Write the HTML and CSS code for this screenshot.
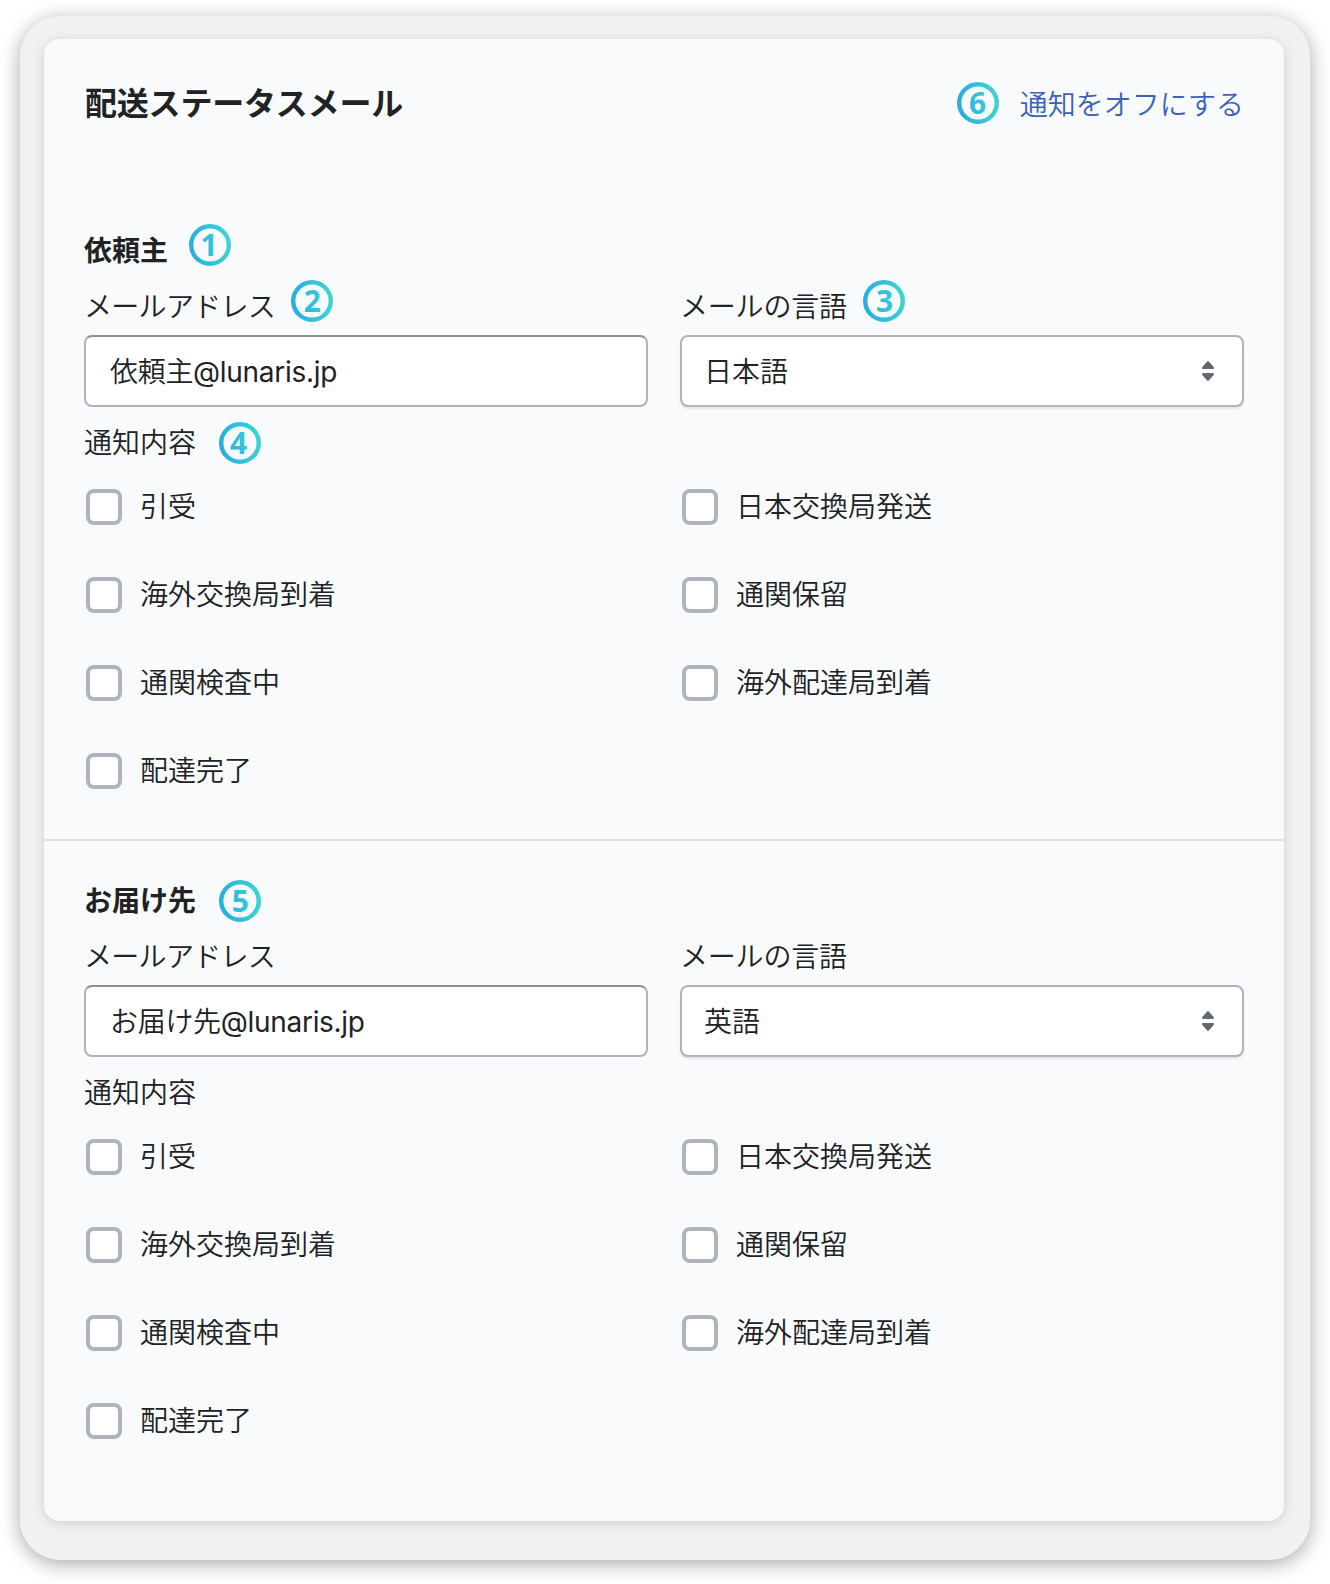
FILE: index.html
```html
<!DOCTYPE html>
<html lang="ja">
<head>
  <meta charset="UTF-8">
  <title>配送ステータスメール</title>
  <link rel="stylesheet" href="styles.css">
</head>
<body>

<svg class="defs" width="0" height="0">
  <defs>
    <linearGradient id="ring" gradientUnits="userSpaceOnUse" x1="0" y1="24" x2="42" y2="18">
      <stop offset="0" stop-color="#29abe2"/>
      <stop offset="1" stop-color="#3cd6d0"/>
    </linearGradient>
    <symbol id="arrows" viewBox="0 0 12 20">
      <path d="M5.2.4Q6-.4 6.8.4L11.7 6Q12.4 8 11 8H1Q-.4 8 .3 6ZM5.2 19.6Q6 20.4 6.8 19.6L11.7 14Q12.4 12 11 12H1Q-.4 12 .3 14Z"/>
    </symbol>
  </defs>
</svg>

<div class="frame">
  <div class="panel">
    <div class="header">
      <h1>配送ステータスメール</h1>
      <svg class="badge" viewBox="0 0 42 42"><circle cx="21" cy="21" r="18.8"/><text x="20.5" y="31.5">6</text></svg>
      <a class="link">通知をオフにする</a>
    </div>

    <div class="section">
      <div class="row raised title">
        <h2>依頼主</h2>
        <svg class="badge" viewBox="0 0 42 42"><circle cx="21" cy="21" r="18.8"/><text x="20" y="31.5">1</text></svg>
      </div>
      <div class="columns fields">
        <div class="field">
          <div class="row raised mail">
            <label for="sender-mail">メールアドレス</label>
            <svg class="badge" viewBox="0 0 42 42"><circle cx="21" cy="21" r="18.8"/><text x="21.3" y="31.5">2</text></svg>
          </div>
          <input type="text" id="sender-mail" value="依頼主@lunaris.jp">
        </div>
        <div class="field">
          <div class="row raised lang">
            <label>メールの言語</label>
            <svg class="badge" viewBox="0 0 42 42"><circle cx="21" cy="21" r="18.8"/><text x="21.5" y="31.5">3</text></svg>
          </div>
          <div class="select"><span>日本語</span><svg class="arrows"><use href="#arrows"/></svg></div>
        </div>
      </div>
      <div class="row notice">
        <span>通知内容</span>
        <svg class="badge" viewBox="0 0 42 42"><circle cx="21" cy="21" r="18.8"/><text x="19.5" y="31.5">4</text></svg>
      </div>
      <div class="columns choices">
        <label><input type="checkbox">引受</label>
        <label><input type="checkbox">日本交換局発送</label>
        <label><input type="checkbox">海外交換局到着</label>
        <label><input type="checkbox">通関保留</label>
        <label><input type="checkbox">通関検査中</label>
        <label><input type="checkbox">海外配達局到着</label>
        <label><input type="checkbox">配達完了</label>
      </div>
    </div>

    <div class="section">
      <div class="row">
        <h2>お届け先</h2>
        <svg class="badge" viewBox="0 0 42 42"><circle cx="21" cy="21" r="18.8"/><text x="21.3" y="31.5">5</text></svg>
      </div>
      <div class="columns fields">
        <div class="field">
          <div class="row mail"><label for="receiver-mail">メールアドレス</label></div>
          <input type="text" id="receiver-mail" value="お届け先@lunaris.jp">
        </div>
        <div class="field">
          <div class="row lang"><label>メールの言語</label></div>
          <div class="select"><span>英語</span><svg class="arrows"><use href="#arrows"/></svg></div>
        </div>
      </div>
      <div class="row notice"><span>通知内容</span></div>
      <div class="columns choices">
        <label><input type="checkbox">引受</label>
        <label><input type="checkbox">日本交換局発送</label>
        <label><input type="checkbox">海外交換局到着</label>
        <label><input type="checkbox">通関保留</label>
        <label><input type="checkbox">通関検査中</label>
        <label><input type="checkbox">海外配達局到着</label>
        <label><input type="checkbox">配達完了</label>
      </div>
    </div>
  </div>
</div>

</body>
</html>
```
FILE: styles.css
```css
* { box-sizing: border-box; }
body { margin: 0; padding: 16px 20px 24px; background: #fff; color: #202223; font: 350 28px/40px Inter, "Noto Sans CJK JP", sans-serif; }
h1, h2 { margin: 0; font-weight: 600; }
h1 { padding: 1px 0 0 1px; font-size: 32px; line-height: 48px; letter-spacing: -0.2px; }
h2 { font-size: 28px; line-height: 40px; }
.defs { display: block; }

.frame { height: 1544px; padding: 23px 26px 39px 24px; background: #f0f1f3; border-radius: 40px; box-shadow: 0 4px 20px rgba(0,0,0,0.34); }
.panel { height: 1482px; background: #f9fafc; border-radius: 16px; box-shadow: 0 2px 12px rgba(0,0,0,0.14); }

.header { display: flex; align-items: center; height: 152px; padding: 40px 40px 64px; }
.header .badge { margin-left: auto; }
.link { padding-top: 4px; margin-left: 21px; color: #3a63b8; }

.section { padding: 40px 40px 50px; }
.section + .section { border-top: 2px solid #dfe2e5; }
.row { display: flex; align-items: center; height: 40px; }
.badge { flex: none; width: 42px; height: 42px; margin-left: 23px; }
.badge circle { fill: none; stroke: url(#ring); stroke-width: 4.4; }
.badge text { fill: url(#ring); font: 700 30px "Noto Sans", sans-serif; letter-spacing: 0; text-anchor: middle; }
.raised .badge { margin-bottom: 12px; }
.title .badge { margin-left: 21px; }
.mail { letter-spacing: -0.7px; }
.mail .badge { margin-left: 16px; }
.lang { letter-spacing: -0.2px; }
.lang .badge { margin-left: 16px; }

.columns { display: grid; grid-template-columns: 1fr 1fr; column-gap: 32px; }
.fields { margin: 16px 0; }
.field .row { margin-bottom: 8px; }
input[type="text"], .select { width: 100%; height: 72px; border: 2px solid #aeb4bb; border-radius: 8px; background: #fff; color: #202223; font: inherit; }
input[type="text"] { display: block; padding: 0 24px 3px; border-top-color: #898f94; font-family: Inter, "Noto Sans CJK JP DemiLight", "Noto Sans CJK JP", sans-serif; font-weight: 400; letter-spacing: -0.3px; }
.select { display: flex; align-items: center; justify-content: space-between; padding: 0 28px 0 22px; box-shadow: 0 2px 2px rgba(0,0,0,0.08); }
.select span { padding-top: 1px; }
.arrows { width: 12px; height: 20px; fill: #606871; }

.choices { row-gap: 52px; margin-top: 26px; }
.choices label { display: flex; align-items: center; height: 36px; padding-left: 2px; }
.choices input { appearance: none; width: 36px; height: 36px; margin: 0 18px 0 0; border: 4px solid #aeb4bb; border-radius: 8px; background: #fff; }
```
